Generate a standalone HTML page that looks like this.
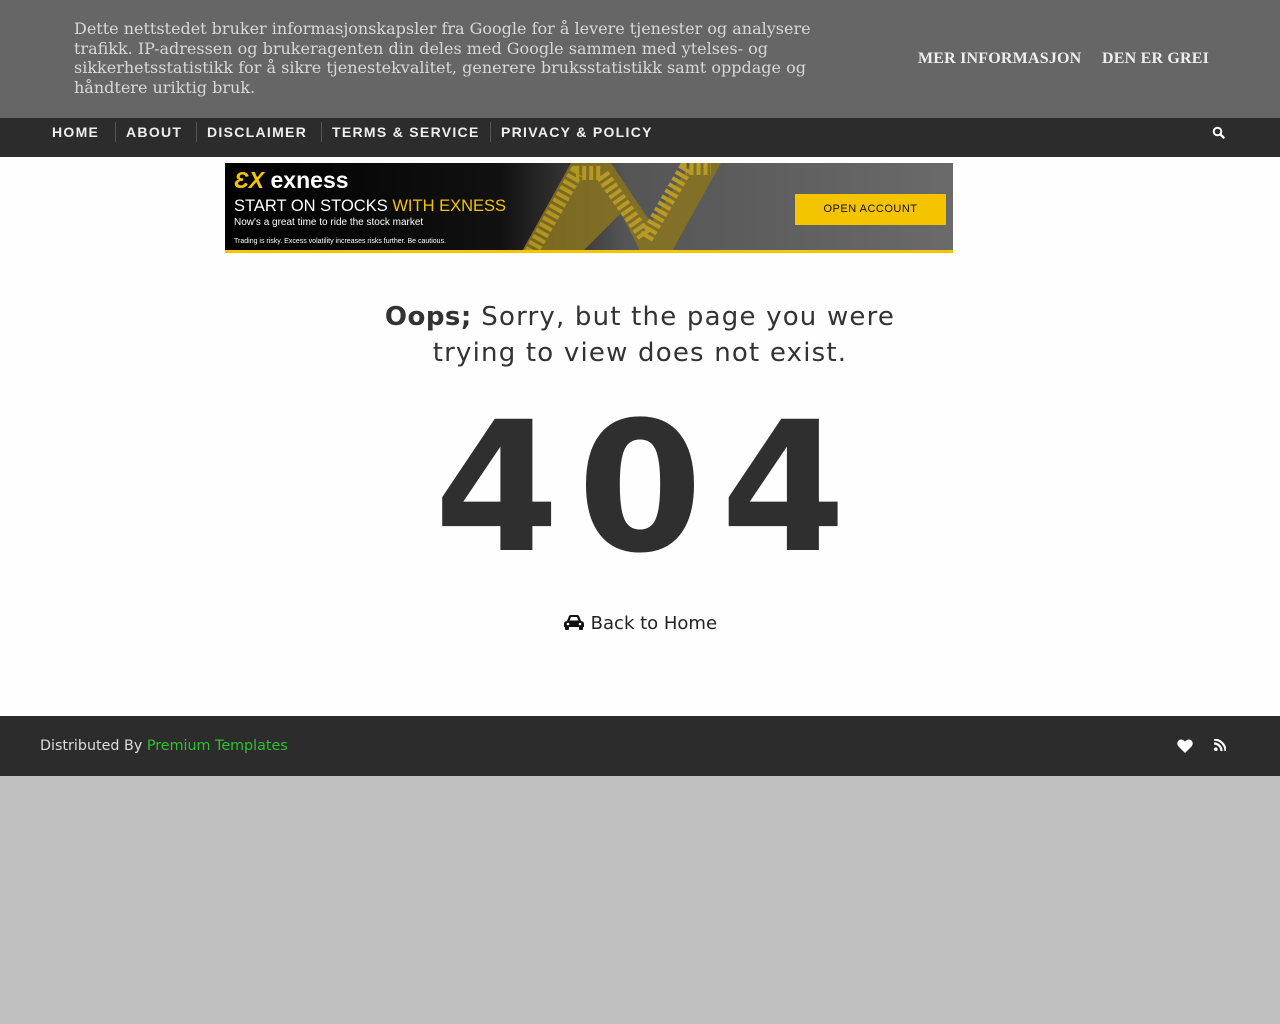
<!DOCTYPE html>
<html><head><meta charset="utf-8"><style>
*{margin:0;padding:0;box-sizing:border-box}
body{width:1280px;height:1024px;background:#c0c0c0;font-family:"DejaVu Sans","Liberation Sans",sans-serif;position:relative;overflow:hidden}
.cookie{position:absolute;left:0;top:0;width:1280px;height:118px;background:#666;color:#ddd}
.cookie p{position:absolute;left:74px;top:19px;width:760px;font-family:"DejaVu Serif","Liberation Serif",serif;font-size:16px;line-height:19.7px;color:#d8d8d8}
.cookie .b{position:absolute;top:50px;font-family:"Liberation Serif",serif;font-weight:bold;font-size:16px;color:#eee;letter-spacing:.2px}
.nav{position:absolute;top:118px;left:0;width:1280px;height:39px;background:#2c2c2c}
.nav span{position:absolute;top:6px;font-family:"Liberation Sans",sans-serif;font-size:14px;font-weight:bold;color:#eee;letter-spacing:1.3px;line-height:16px}
.nav i{position:absolute;top:4px;width:1px;height:20px;background:#555}
.main{position:absolute;top:157px;left:0;width:1280px;height:559px;background:#fefefe}
.ad{position:absolute;left:225px;top:6px;width:728px;height:90px;background:linear-gradient(90deg,#000 0,#111 38%,#555 55%,#6a6a6a 100%);overflow:hidden;border-bottom:3px solid #f5c400}
.foot{position:absolute;top:716px;left:0;width:1280px;height:60px;background:#2c2c2c}
</style></head><body>
<div class="cookie"><p>Dette nettstedet bruker informasjonskapsler fra Google for å levere tjenester og analysere trafikk. IP-adressen og brukeragenten din deles med Google sammen med ytelses- og sikkerhetsstatistikk for å sikre tjenestekvalitet, generere bruksstatistikk samt oppdage og håndtere uriktig bruk.</p>
<span class="b" style="left:918px">MER INFORMASJON</span><span class="b" style="left:1102px">DEN ER GREI</span></div>
<div class="nav">
<span style="left:52px">HOME</span><i style="left:115px"></i>
<span style="left:126px">ABOUT</span><i style="left:196px"></i>
<span style="left:207px">DISCLAIMER</span><i style="left:321px"></i>
<span style="left:332px">TERMS &amp; SERVICE</span><i style="left:490px"></i>
<span style="left:501px">PRIVACY &amp; POLICY</span>
<svg style="position:absolute;left:1212px;top:8px" width="13" height="13" viewBox="0 0 13 13"><circle cx="5.5" cy="5.5" r="3.8" fill="none" stroke="#fff" stroke-width="2"/><path d="M8.3 8.3L11.5 11.5" stroke="#fff" stroke-width="2.4" stroke-linecap="round"/></svg>
</div>
<div class="main">
<div class="ad">
<svg style="position:absolute;left:236px;top:0;opacity:.85" width="400" height="90" viewBox="0 0 400 90"><path d="M60 90L110 0H150L190 60L230 0H260L210 90H180L160 50L120 90Z" fill="#8a7420"/><path d="M70 90L115 10H140L185 75L225 5H250" stroke="#c9a81f" stroke-width="14" fill="none" stroke-dasharray="4 3"/></svg>
<div style="position:absolute;left:9px;top:4px;font-size:23px;font-weight:bold;color:#fff;font-family:'Liberation Sans',sans-serif"><span style="color:#f5c400;font-style:italic">ƐX</span> exness</div>
<div style="position:absolute;left:9px;top:34px;font-size:16.5px;color:#fff;font-family:'Liberation Sans',sans-serif">START ON STOCKS <span style="color:#f5c400">WITH EXNESS</span></div>
<div style="position:absolute;left:9px;top:54px;font-size:10px;color:#fff;font-family:'Liberation Sans',sans-serif">Now's a great time to ride the stock market</div>
<div style="position:absolute;left:9px;top:75px;font-size:7px;color:#fff;font-family:'Liberation Sans',sans-serif">Trading is risky. Excess volatility increases risks further. Be cautious.</div>
<div style="position:absolute;left:570px;top:31px;width:151px;height:31px;background:#f5c400;color:#111;font-size:11px;text-align:center;line-height:31px;font-family:'Liberation Sans',sans-serif;letter-spacing:.5px">OPEN ACCOUNT</div>
</div>
<div style="position:absolute;left:0;width:1280px;top:142px;text-align:center;font-size:26px;line-height:36px;color:#333;letter-spacing:1.2px"><b style="letter-spacing:.5px">Oops;</b> Sorry, but the page you were<br>trying to view does not exist.</div>
<div style="position:absolute;left:0;width:1280px;top:222px;padding-left:18px;text-align:center;font-size:180px;font-weight:bold;color:#2f2f2f;line-height:220px;letter-spacing:18px">404</div>
<div style="position:absolute;left:0;width:1280px;top:456px;text-align:center;font-size:18px;color:#222">
<svg width="22" height="16" viewBox="0 0 22 16" style="vertical-align:-1px"><path d="M4 7L6 2Q6.5 1 8 1H14Q15.5 1 16 2L18 7Q21 7.5 21 10V13H1V10Q1 7.5 4 7ZM6.5 6.5H15.5L14 3H8Z" fill="#111" fill-rule="evenodd"/><rect x="2" y="12" width="4" height="4" rx="1" fill="#111"/><rect x="16" y="12" width="4" height="4" rx="1" fill="#111"/><circle cx="5" cy="10" r="1.3" fill="#fff"/><circle cx="17" cy="10" r="1.3" fill="#fff"/></svg> Back to Home</div>
</div>
<div class="foot">
<div style="position:absolute;left:40px;top:22px;font-size:14.3px;color:#ddd">Distributed By <span style="color:#2ec02e">Premium Templates</span></div>
<svg style="position:absolute;left:1177px;top:23px" width="16" height="14" viewBox="0 0 16 14"><path d="M8 14L1.5 7.5Q-1 4.5 1.5 1.5Q4.5-1 8 2.5Q11.5-1 14.5 1.5Q17 4.5 14.5 7.5Z" fill="#fff"/></svg>
<svg style="position:absolute;left:1214px;top:23px" width="12" height="12" viewBox="0 0 12 12"><circle cx="1.8" cy="10.2" r="1.8" fill="#fff"/><path d="M0 4.5A7.5 7.5 0 0 1 7.5 12M0 0.5A11.5 11.5 0 0 1 11.5 12" stroke="#fff" stroke-width="2.2" fill="none"/></svg>
</div>
</body></html>
